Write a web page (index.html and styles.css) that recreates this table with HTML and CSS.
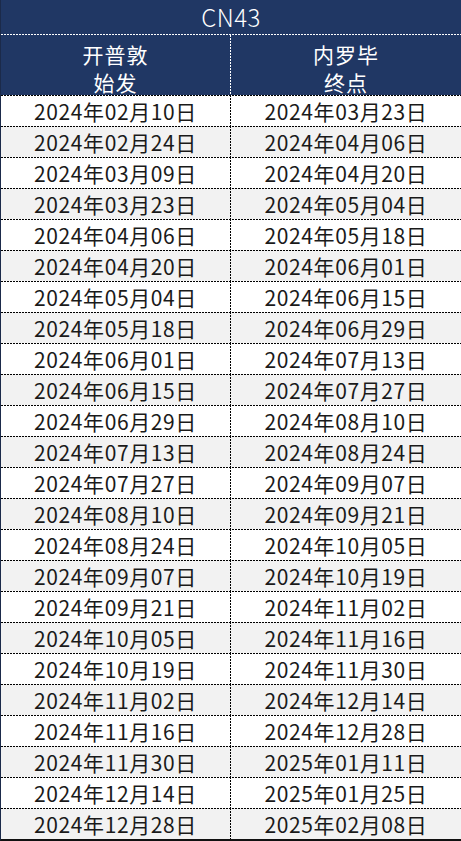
FILE: index.html
```html
<!DOCTYPE html>
<html lang="zh">
<head>
<meta charset="utf-8">
<link rel="stylesheet" href="styles.css">
</head>
<body>
<div class="sheet">
  <div class="title">CN43</div>
  <div class="head">
    <div class="hcell"><div class="hline">开普敦</div><div class="hline">始发</div></div>
    <div class="hcell"><div class="hline">内罗毕</div><div class="hline">终点</div></div>
  </div>
  <div class="rows">
    <div class="row"><div class="cell">2024年02月10日</div><div class="cell">2024年03月23日</div></div>
    <div class="row"><div class="cell">2024年02月24日</div><div class="cell">2024年04月06日</div></div>
    <div class="row"><div class="cell">2024年03月09日</div><div class="cell">2024年04月20日</div></div>
    <div class="row"><div class="cell">2024年03月23日</div><div class="cell">2024年05月04日</div></div>
    <div class="row"><div class="cell">2024年04月06日</div><div class="cell">2024年05月18日</div></div>
    <div class="row"><div class="cell">2024年04月20日</div><div class="cell">2024年06月01日</div></div>
    <div class="row"><div class="cell">2024年05月04日</div><div class="cell">2024年06月15日</div></div>
    <div class="row"><div class="cell">2024年05月18日</div><div class="cell">2024年06月29日</div></div>
    <div class="row"><div class="cell">2024年06月01日</div><div class="cell">2024年07月13日</div></div>
    <div class="row"><div class="cell">2024年06月15日</div><div class="cell">2024年07月27日</div></div>
    <div class="row"><div class="cell">2024年06月29日</div><div class="cell">2024年08月10日</div></div>
    <div class="row"><div class="cell">2024年07月13日</div><div class="cell">2024年08月24日</div></div>
    <div class="row"><div class="cell">2024年07月27日</div><div class="cell">2024年09月07日</div></div>
    <div class="row"><div class="cell">2024年08月10日</div><div class="cell">2024年09月21日</div></div>
    <div class="row"><div class="cell">2024年08月24日</div><div class="cell">2024年10月05日</div></div>
    <div class="row"><div class="cell">2024年09月07日</div><div class="cell">2024年10月19日</div></div>
    <div class="row"><div class="cell">2024年09月21日</div><div class="cell">2024年11月02日</div></div>
    <div class="row"><div class="cell">2024年10月05日</div><div class="cell">2024年11月16日</div></div>
    <div class="row"><div class="cell">2024年10月19日</div><div class="cell">2024年11月30日</div></div>
    <div class="row"><div class="cell">2024年11月02日</div><div class="cell">2024年12月14日</div></div>
    <div class="row"><div class="cell">2024年11月16日</div><div class="cell">2024年12月28日</div></div>
    <div class="row"><div class="cell">2024年11月30日</div><div class="cell">2025年01月11日</div></div>
    <div class="row"><div class="cell">2024年12月14日</div><div class="cell">2025年01月25日</div></div>
    <div class="row"><div class="cell">2024年12月28日</div><div class="cell">2025年02月08日</div></div>
  </div>
</div>
</body>
</html>
```

FILE: styles.css
```css
html, body {
  margin: 0;
  padding: 0;
  background: #ffffff;
}

.sheet {
  width: 461px;
  height: 841px;
  overflow: hidden;
  font-family: "Noto Sans CJK SC", "Noto Sans", sans-serif;
  font-weight: 400;
  box-sizing: border-box;
  border-left: 1px solid #1b2a4a;
  border-bottom: 2px solid #111;
}

.title {
  height: 34px;
  background-color: #203764;
  color: #ffffff;
  font-size: 24px;
  font-weight: 300;
  line-height: 34px;
  text-align: center;
  letter-spacing: 0.5px;
  background-image: repeating-linear-gradient(to right, #ffffff 0 2px, transparent 2px 3px);
  background-size: 100% 1px;
  background-position: left bottom;
  background-repeat: no-repeat;
  padding-bottom: 1px;
}

.head {
  display: grid;
  grid-template-columns: 229px 1px 1fr;
  height: 60px;
  background-color: #203764;
}

.head .hcell:first-child {
  grid-column: 1;
}

.head .hcell:last-child {
  grid-column: 3;
}

.head::before {
  content: "";
  grid-column: 2;
  grid-row: 1;
  background-image: repeating-linear-gradient(to bottom, #ffffff 0 2px, transparent 2px 3px);
}

.hcell {
  grid-row: 1;
  color: #ffffff;
  font-size: 21px;
  text-align: center;
  padding-top: 5px;
  display: flex;
  flex-direction: column;
}

.hline {
  height: 28px;
  line-height: 28px;
  letter-spacing: 1px;
}

.rows {
  display: flex;
  flex-direction: column;
}

.row {
  display: grid;
  grid-template-columns: 229px 1px 1fr;
  height: 31px;
  background-image: repeating-linear-gradient(to right, #000 0 2px, transparent 2px 3px);
  background-size: 100% 1px;
  background-position: left top;
  background-repeat: no-repeat;
}

.row:nth-child(even) {
  background-color: #f2f2f2;
}

.row::before {
  content: "";
  grid-column: 2;
  grid-row: 1;
  background-image: repeating-linear-gradient(to bottom, #000 0 2px, transparent 2px 3px);
}

.cell {
  grid-row: 1;
  font-size: 21px;
  line-height: 32px;
  letter-spacing: 0.6px;
  text-align: center;
  color: #1a1a1a;
}

.cell:first-child {
  grid-column: 1;
}

.cell:last-child {
  grid-column: 3;
}
```
